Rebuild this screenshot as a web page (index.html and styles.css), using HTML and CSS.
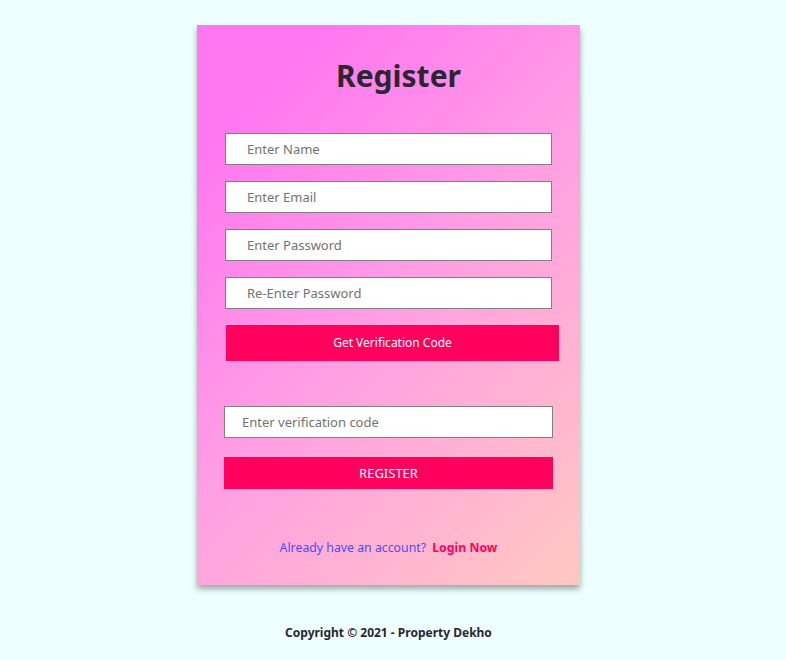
FILE: index.html
```html
<!DOCTYPE html>
<html>
<head>
<meta charset="utf-8">
<link rel="stylesheet" href="styles.css">
</head>
<body>
<div class="wrap">
  <div class="card">
    <h1 class="title">Register</h1>
    <form class="form">
      <input class="field" type="text" placeholder="Enter Name">
      <input class="field" type="email" placeholder="Enter Email">
      <input class="field" type="password" placeholder="Enter Password">
      <input class="field" type="password" placeholder="Re-Enter Password">
      <button class="btn btn-code" type="button">Get Verification Code</button>
      <input class="field field-code" type="text" placeholder="Enter verification code">
      <button class="btn btn-register" type="button">REGISTER</button>
    </form>
    <p class="login">Already have an account? <a class="login-link" href="#">Login Now</a></p>
  </div>
  <p class="footer">Copyright © 2021 - Property Dekho</p>
</div>
</body>
</html>
```
FILE: styles.css
```css
* { box-sizing: border-box; }
html, body { margin: 0; padding: 0; }
body {
  background: #edfffe;
  font-family: "Noto Sans", "Open Sans", sans-serif;
  height: 660px;
}
.wrap {
  width: 777px;
  display: flex;
  flex-direction: column;
  align-items: center;
  padding-top: 25px;
}
.card {
  width: 383px;
  height: 560px;
  background: linear-gradient(135deg, #ff78f0 15%, #ff9ee4 50%, #ffc8c0 100%);
  box-shadow: 0 4px 6px rgba(0, 0, 0, 0.35);
  display: flex;
  flex-direction: column;
  padding-top: 31px;
}
.title {
  margin: 0;
  padding-left: 20px;
  text-align: center;
  font-size: 30px;
  line-height: 40px;
  font-weight: 700;
  color: #2b2630;
}
.form {
  display: flex;
  flex-direction: column;
  padding-left: 27px;
  margin-top: 37px;
}
.field {
  width: 327px;
  height: 32px;
  margin: 0 0 16px 1px;
  border: 1px solid #808080;
  background: #fff;
  padding: 0 0 0 21px;
  font-family: inherit;
  font-size: 13px;
  color: #333;
  outline: none;
}
.field::placeholder { color: #727272; }
.btn {
  border: none;
  background: #ff005c;
  color: #fff;
  font-family: inherit;
  font-size: 12px;
  line-height: 16px;
  padding: 0 0 1px 0;
  cursor: pointer;
}
.btn-code {
  width: 333px;
  height: 36px;
  margin-left: 2px;
}
.field-code {
  width: 329px;
  margin: 45px 0 19px 0;
  padding-left: 17px;
}
.btn-register {
  width: 329px;
  height: 32px;
  font-size: 13px;
}
.login {
  margin: 49px 0 0 0;
  text-align: center;
  font-size: 12.3px;
  line-height: 20px;
  color: #4b4bff;
}
.login-link {
  margin-left: 3px;
  color: #ff0060;
  font-weight: 700;
  text-decoration: none;
}
.footer {
  margin: 40px 0 0 0;
  font-size: 12px;
  line-height: 16px;
  font-weight: 700;
  color: #2b2630;
}
```
